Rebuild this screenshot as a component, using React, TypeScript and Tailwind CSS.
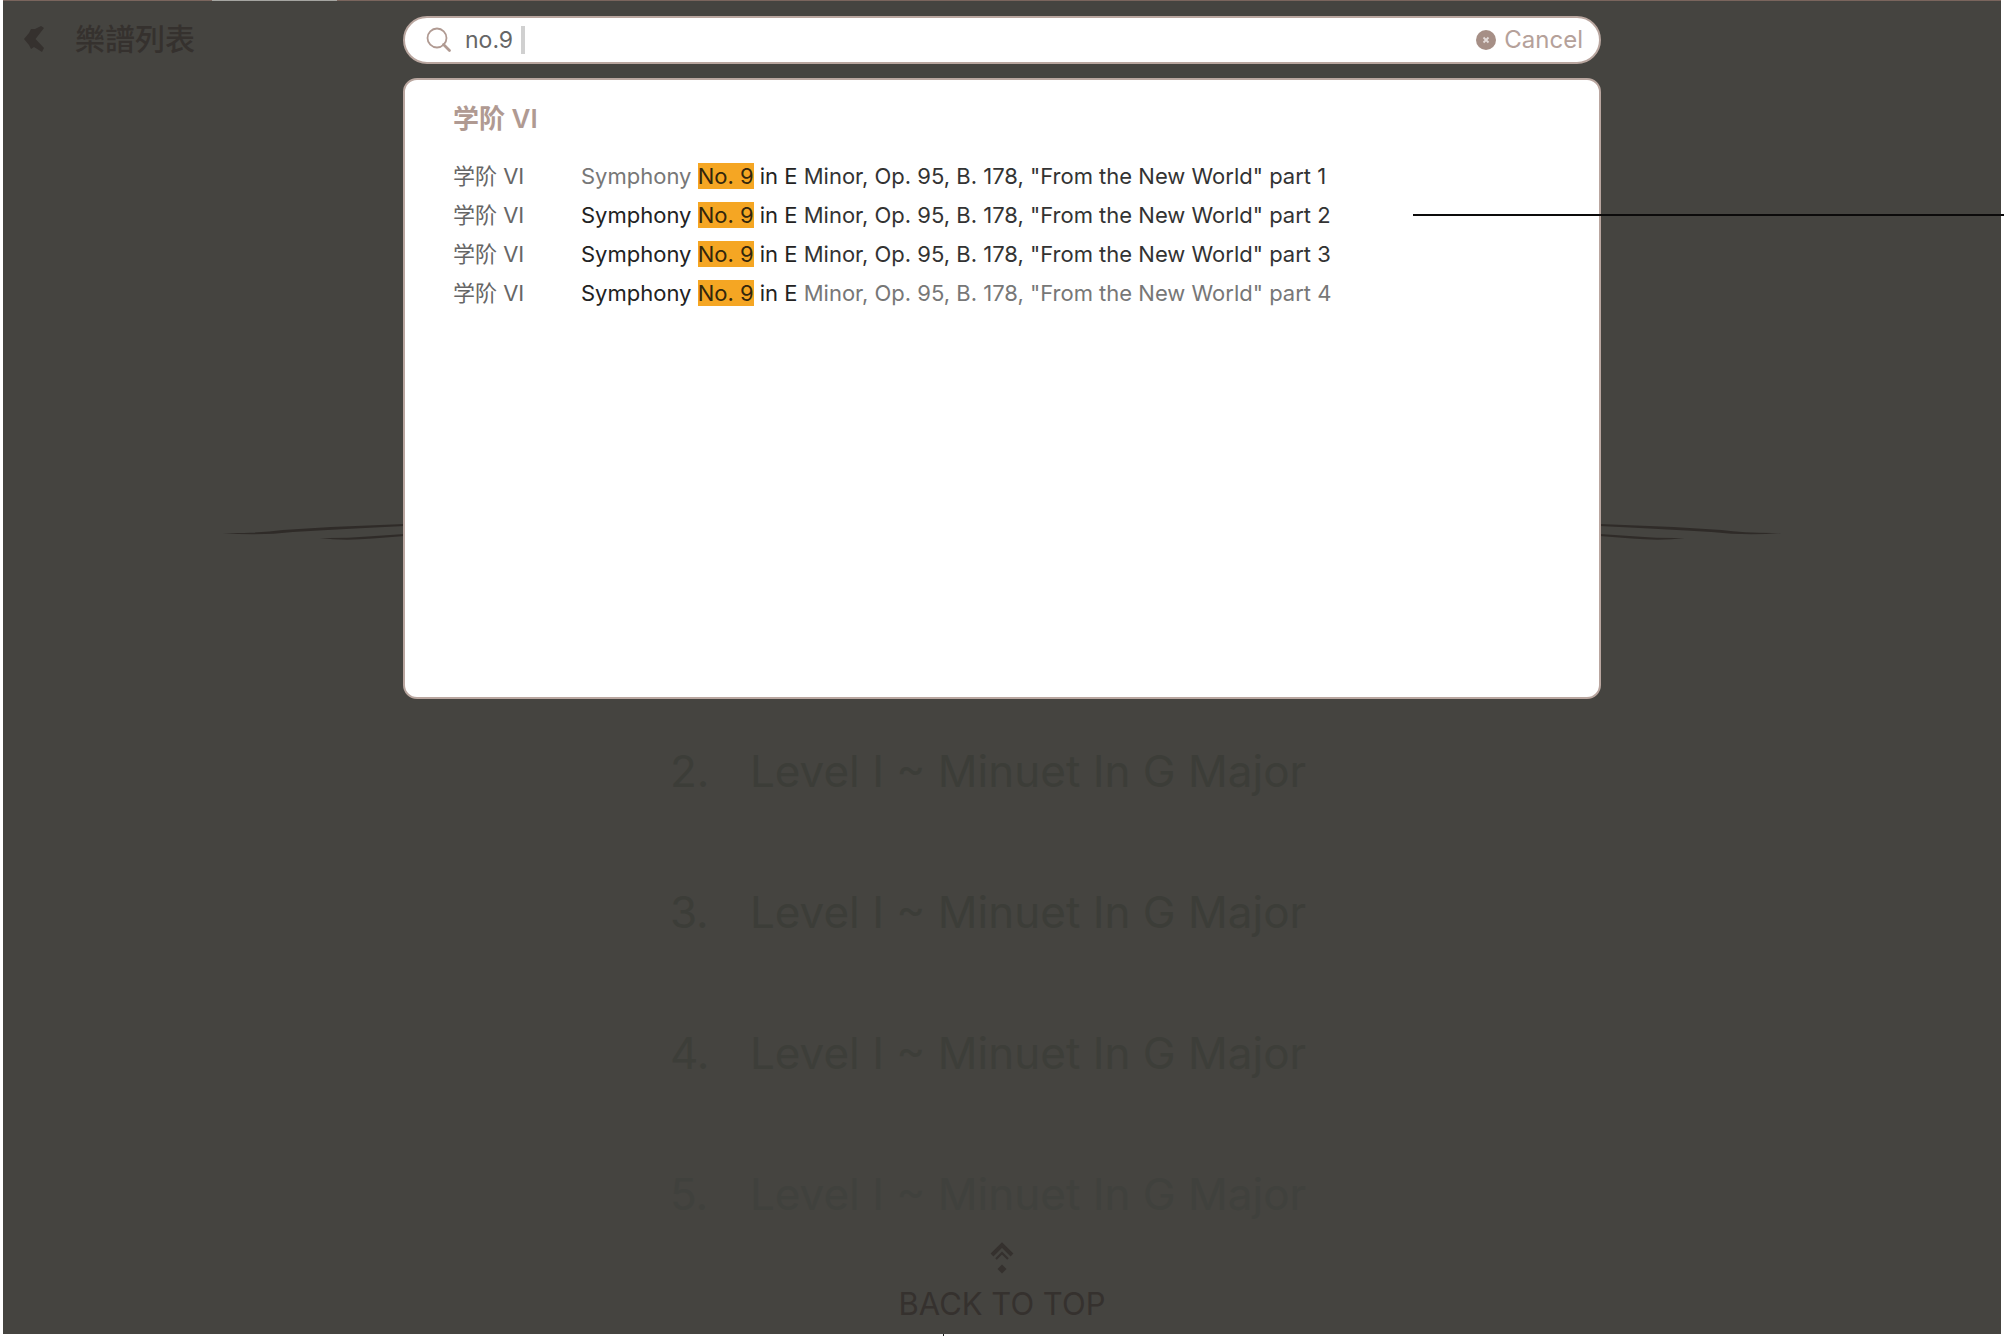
import React from "react";

const results = [
  { lead: "text-[#777777]", mid: "text-[#222222]", tail: "text-[#333333]", part: 1 },
  { lead: "text-[#222222]", mid: "text-[#222222]", tail: "text-[#333333]", part: 2 },
  { lead: "text-[#222222]", mid: "text-[#222222]", tail: "text-[#333333]", part: 3 },
  { lead: "text-[#222222]", mid: "text-[#222222]", tail: "text-[#777777]", part: 4 },
];

const songs = [
  { no: 2, tone: "text-[#3c3d38]" },
  { no: 3, tone: "text-[#3c3d38]" },
  { no: 4, tone: "text-[#3d3e39]" },
  { no: 5, tone: "text-[#40413d]" },
];

function BackIcon() {
  return (
    <svg className="h-7 w-6" viewBox="0 0 24 28" aria-hidden="true">
      <path d="M12 4 L18 1 L21 3 L12.500 14 L21 23 L19 27 L11 22 L8 24 L6 20 L1 14 L6 8 L8 4 Z" fill="#35312e" />
    </svg>
  );
}

function BrushStrokes() {
  return (
    <svg className="h-[18px] w-full" viewBox="0 0 1560 18" preserveAspectRatio="none" aria-hidden="true">
      <g fill="#2f2b28">
        <path d="M0 10 Q35 10.500 60 7 Q120 3 182 1 L182 3 Q120 6 70 9 Q35 13 0 10 Z" />
        <path d="M97 15 Q120 15.500 145 13.500 L182 11 L182 13 L150 15.500 Q120 18 97 15 Z" />
        <path d="M1560 10 Q1525 10.500 1500 7 Q1440 3 1378 1 L1378 3 Q1440 6 1490 9 Q1525 13 1560 10 Z" />
        <path d="M1463 15 Q1440 15.500 1415 13.500 L1378 11 L1378 13 L1410 15.500 Q1440 18 1463 15 Z" />
      </g>
    </svg>
  );
}

function SearchIcon() {
  return (
    <svg className="mr-3 h-7 w-7" viewBox="0 0 28 28" fill="none" stroke="#b09a92" strokeLinecap="round" aria-hidden="true">
      <circle cx="12" cy="12" r="9.500" strokeWidth="1.800" />
      <path d="M18.500 18.500 L24.500 24.500" strokeWidth="2.800" />
    </svg>
  );
}

function ClearIcon() {
  return (
    <svg className="size-5" viewBox="0 0 20 20" aria-hidden="true">
      <circle cx="10" cy="10" r="10" fill="#a68f86" />
      <path d="M7.500 7.500 L12.500 12.500 M12.500 7.500 L7.500 12.500" stroke="#e3dbd8" strokeWidth="1.800" />
    </svg>
  );
}

function TopIcon() {
  return (
    <svg className="h-8 w-6" viewBox="0 0 24 32" fill="none" stroke="#35312e" aria-hidden="true">
      <path d="M2 13 L12 3 L22 13" strokeWidth="4" />
      <path d="M6 17 L12 11 L18 17" strokeWidth="2.200" />
      <path d="M12 22.500 L16.500 27 L12 31.500 L7.500 27 Z" fill="#35312e" stroke="none" />
    </svg>
  );
}

export default function App() {
  return (
    <div className="relative min-h-screen bg-white px-[3px] pb-0.5 font-[Inter,'Noto_Sans_CJK_SC',sans-serif]">
      <div className="flex min-h-[calc(100vh-2px)] flex-col bg-[#454440]">
        <div className="flex h-px bg-[#7a655d]">
          <div className="ml-[209px] w-[125px] bg-[#a5a5a1]" />
        </div>

        <header className="flex h-[75px] items-center gap-7 pl-5">
          <button type="button" aria-label="返回" className="cursor-pointer">
            <BackIcon />
          </button>
          <h1 className="pb-1 font-['Noto_Sans_CJK_TC',sans-serif] text-[30px] leading-[44px] font-medium text-[#35312e]">
            樂譜列表
          </h1>
        </header>

        <div className="mx-auto mt-[447px] w-[78%]">
          <BrushStrokes />
        </div>

        <ol className="mx-auto mt-[198px] flex flex-col gap-[77px] pr-7">
          {songs.map((song) => (
            <li key={song.no} className={`flex h-16 items-center text-[44px] leading-[64px] ${song.tone}`}>
              <span className="w-20">{song.no}.</span>
              <span>Level I ~ Minuet In G Major</span>
            </li>
          ))}
        </ol>

        <a href="#top" className="mx-auto mt-4 flex flex-col items-center text-[31px] leading-[48px] text-[#35312e]">
          <TopIcon />
          <span className="mt-1.5">BACK TO TOP</span>
        </a>
      </div>

      <div className="absolute inset-x-0 top-4 mx-auto flex w-full max-w-[1198px] flex-col gap-[14px]">
        <form className="flex h-12 items-center rounded-full border-2 border-[#b9a69f] bg-white pr-4 pl-5" onSubmit={(e) => e.preventDefault()}>
          <SearchIcon />
          <input aria-label="Search" type="text" defaultValue="no.9" className="field-sizing-content bg-transparent text-[23px] leading-8 text-[#666666] outline-none" />
          <span className="ml-2 h-7 w-1 bg-[#d0d0d0]" />
          <button type="button" className="ml-auto flex cursor-pointer items-center gap-2 text-2xl leading-8 text-[#b5a19a]">
            <ClearIcon />
            Cancel
          </button>
        </form>

        <section className="min-h-[621px] rounded-[14px] border-2 border-[#b9a69f] bg-white pt-[19px] pr-8 pl-[48px]">
          <h2 className="text-[26px] leading-10 font-semibold text-[#b09a92]">学阶 VI</h2>
          <table className="mt-[17px] text-left text-[22px] leading-[26px]">
            <tbody>
              {results.map((r) => (
                <tr key={r.part} className="h-[39px]">
                  <td className="w-32 p-0 text-[#666666]">学阶 VI</td>
                  <td className="p-0 whitespace-nowrap">
                    <span className={r.lead}>Symphony </span>
                    <mark className="inline-block bg-[#f5a623] text-[#33260c]">No. 9</mark>
                    <span className={r.mid}> in E </span>
                    <span className={r.tail}>Minor, Op. 95, B. 178, "From the New World" part {r.part}</span>
                  </td>
                </tr>
              ))}
            </tbody>
          </table>
        </section>
      </div>

      <div className="absolute top-[214px] right-0 h-0.5 w-[591px] bg-[#0c0b0b]" />
      <div className="absolute bottom-0 left-[943px] h-0.5 w-px bg-[#222222]" />
    </div>
  );
}
